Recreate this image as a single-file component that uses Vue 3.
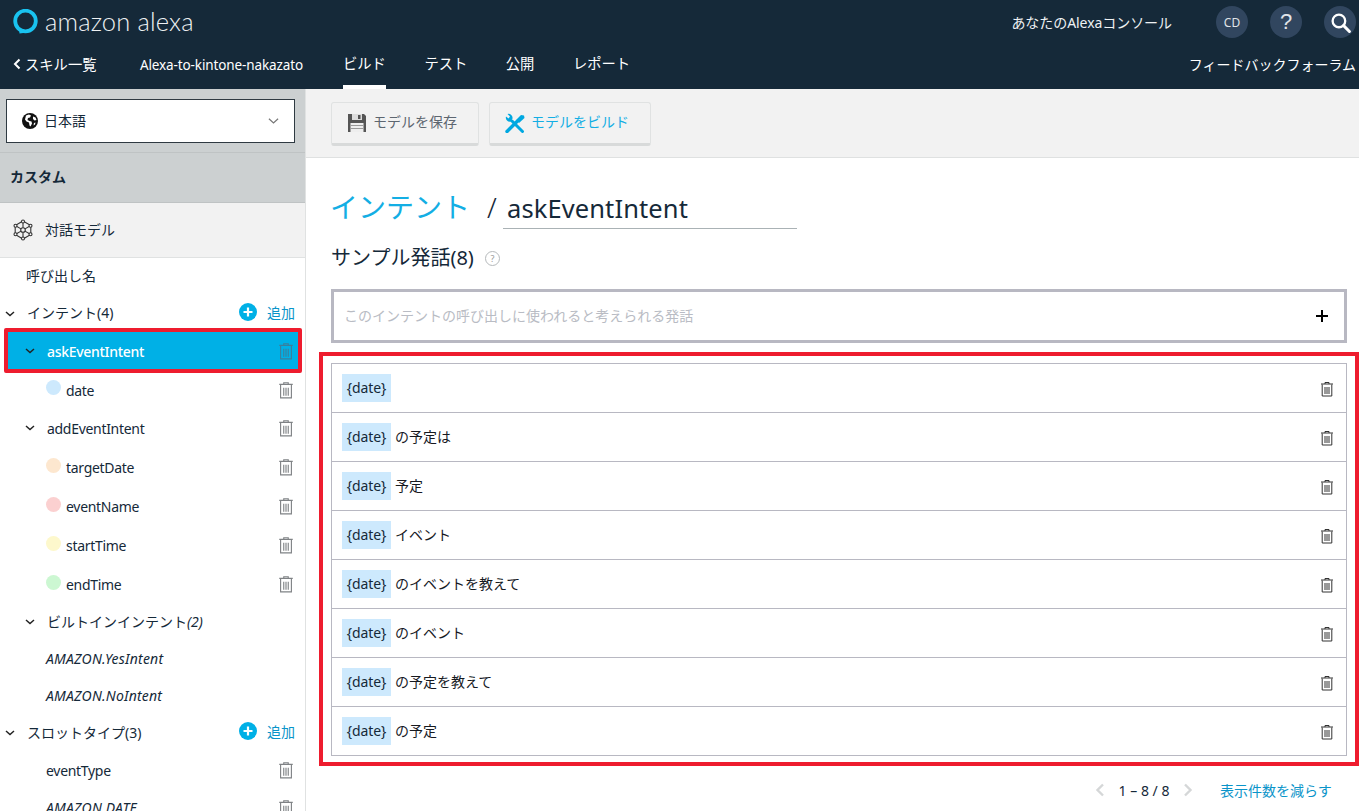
<script setup>
const samples = ['', 'の予定は', '予定', 'イベント', 'のイベントを教えて', 'のイベント', 'の予定を教えて', 'の予定']
const tabs = [
  { label: 'ビルド', active: true },
  { label: 'テスト' },
  { label: '公開' },
  { label: 'レポート' }
]
const slots = [
  { name: 'targetDate', color: '#fde7cf' },
  { name: 'eventName', color: '#fbd0d0' },
  { name: 'startTime', color: '#fdf8cc' },
  { name: 'endTime', color: '#ccf7d2' }
]
</script>

<template>
  <div class="page">
    <header class="header">
      <div class="top">
        <div class="brand">
          <svg class="ring" viewBox="0 0 25 25">
            <circle cx="12.500" cy="12" r="10.300" fill="none" stroke="#19c3f0" stroke-width="3.800"/>
            <path d="M6 19.500L6.500 24.500 14 23.500 10 20z" fill="#19c3f0"/>
          </svg>
          <span class="wordmark">amazon alexa</span>
        </div>
        <div class="top-right">
          <span class="console">あなたのAlexaコンソール</span>
          <span class="round cd">CD</span>
          <span class="round q">?</span>
          <span class="round">
            <svg viewBox="0 0 20 20" class="search"><circle cx="8.500" cy="8.500" r="6" fill="none" stroke="#fff" stroke-width="2.200"/><path d="M13 13l5.500 5.500" stroke="#fff" stroke-width="2.800" stroke-linecap="round"/></svg>
          </span>
        </div>
      </div>
      <div class="nav">
        <span class="back"><svg viewBox="0 0 8 12" class="back-icon"><path d="M6.500 1.500L2 6l4.500 4.500" fill="none" stroke="#fff" stroke-width="2"/></svg>スキル一覧</span>
        <span class="skill">Alexa-to-kintone-nakazato</span>
        <span v-for="t in tabs" :key="t.label" class="tab" :class="{ active: t.active }">{{ t.label }}</span>
        <span class="feedback">フィードバックフォーラム</span>
      </div>
    </header>

    <div class="body">
      <aside class="side">
        <div class="lang-wrap">
          <div class="lang">
            <svg viewBox="0 0 16 16" class="globe"><circle cx="8" cy="8" r="8" fill="#111"/><path d="M4 2.500l3-1 2 1-1 2-2 .5-.5 2 2 1 2 .5.5 2-1.500 3-1-1-.5-3-2.500-1-1.500-2zM11 3.500l2.500 1 1 2.500-2 .5-1.500-1.500zM12 10l1.500-.5-.5 2-1.500 1z" fill="#fff"/></svg>
            <span class="cjk">日本語</span>
            <svg viewBox="0 0 12 8" class="lang-caret"><path d="M1 1.500l5 4.500 5-4.500" fill="none" stroke="#777" stroke-width="1.300"/></svg>
          </div>
        </div>
        <div class="custom">カスタム</div>
        <div class="model">
          <svg viewBox="0 0 22 22" class="gear"><g fill="none" stroke="#333" stroke-width="1.100"><path d="M11 2l7.800 4.500v9L11 20l-7.800-4.500v-9z"/><circle cx="11" cy="11" r="2.300"/><path d="M11 2v6.700M3.200 6.500l5.800 3.400M18.800 6.500L13 9.900M3.200 15.500l5.800-3.400M18.800 15.500L13 12.100M11 20v-6.700"/></g><g fill="#fff" stroke="#333" stroke-width="1.100"><circle cx="11" cy="2.500" r="1.500"/><circle cx="3.500" cy="6.700" r="1.500"/><circle cx="18.500" cy="6.700" r="1.500"/><circle cx="3.500" cy="15.300" r="1.500"/><circle cx="18.500" cy="15.300" r="1.500"/><circle cx="11" cy="19.500" r="1.500"/></g></svg>
          <span class="cjk">対話モデル</span>
        </div>

        <div class="row r37 lvl0"><span class="lbl up">呼び出し名</span></div>

        <div class="row r37">
          <svg viewBox="0 0 10 6" class="caret c0"><path d="M1 1l4 3.500L9 1" fill="none" stroke="#222" stroke-width="1.500"/></svg>
          <span class="lbl up">インテント(4)</span>
          <span class="add"><svg viewBox="0 0 18 18" class="plus"><circle cx="9" cy="9" r="9" fill="#00b0e6"/><path d="M9 4.500v9M4.500 9h9" stroke="#fff" stroke-width="2.200"/></svg>追加</span>
        </div>

        <div class="row r38 selected">
          <svg viewBox="0 0 10 6" class="caret c1"><path d="M1 1l4 3.500L9 1" fill="none" stroke="#222" stroke-width="1.500"/></svg>
          <span class="lbl intent">askEventIntent</span>
          <svg viewBox="0 0 14 16" class="trash side-trash sel-trash"><g fill="none" stroke="currentColor"><path d="M1 3h12M5 3V1.500h4V3"/><path d="M2.200 3.500v11.500h9.600V3.500"/><path d="M5 6v7M7 6v7M9 6v7"/></g></svg>
        </div>

        <div class="row r40 slot">
          <i class="dot dot-date"></i><span class="lbl latin">date</span>
          <svg viewBox="0 0 14 16" class="trash side-trash"><g fill="none" stroke="currentColor"><path d="M1 3h12M5 3V1.500h4V3"/><path d="M2.200 3.500v11.500h9.600V3.500"/><path d="M5 6v7M7 6v7M9 6v7"/></g></svg>
        </div>

        <div class="row r36 add-intent">
          <svg viewBox="0 0 10 6" class="caret c1"><path d="M1 1l4 3.500L9 1" fill="none" stroke="#222" stroke-width="1.500"/></svg>
          <span class="lbl latin">addEventIntent</span>
          <svg viewBox="0 0 14 16" class="trash side-trash"><g fill="none" stroke="currentColor"><path d="M1 3h12M5 3V1.500h4V3"/><path d="M2.200 3.500v11.500h9.600V3.500"/><path d="M5 6v7M7 6v7M9 6v7"/></g></svg>
        </div>

        <div v-for="s in slots" :key="s.name" class="row r39 slot lower">
          <i class="dot" :style="{ background: s.color }"></i><span class="lbl latin">{{ s.name }}</span>
          <svg viewBox="0 0 14 16" class="trash side-trash"><g fill="none" stroke="currentColor"><path d="M1 3h12M5 3V1.500h4V3"/><path d="M2.200 3.500v11.500h9.600V3.500"/><path d="M5 6v7M7 6v7M9 6v7"/></g></svg>
        </div>

        <div class="row r36">
          <svg viewBox="0 0 10 6" class="caret c1"><path d="M1 1l4 3.500L9 1" fill="none" stroke="#222" stroke-width="1.500"/></svg>
          <span class="lbl cjk">ビルトインインテント<em>(2)</em></span>
        </div>
        <div class="row r37 lvl2"><span class="lbl"><em class="wide">AMAZON.YesIntent</em></span></div>
        <div class="row r37 lvl2"><span class="lbl"><em class="wide">AMAZON.NoIntent</em></span></div>

        <div class="row r37">
          <svg viewBox="0 0 10 6" class="caret c0"><path d="M1 1l4 3.500L9 1" fill="none" stroke="#222" stroke-width="1.500"/></svg>
          <span class="lbl cjk">スロットタイプ(3)</span>
          <span class="add"><svg viewBox="0 0 18 18" class="plus"><circle cx="9" cy="9" r="9" fill="#00b0e6"/><path d="M9 4.500v9M4.500 9h9" stroke="#fff" stroke-width="2.200"/></svg>追加</span>
        </div>
        <div class="row r38 lvl2">
          <span class="lbl latin">eventType</span>
          <svg viewBox="0 0 14 16" class="trash side-trash"><g fill="none" stroke="currentColor"><path d="M1 3h12M5 3V1.500h4V3"/><path d="M2.200 3.500v11.500h9.600V3.500"/><path d="M5 6v7M7 6v7M9 6v7"/></g></svg>
        </div>
        <div class="row r37 lvl2">
          <span class="lbl"><em class="wide">AMAZON.DATE</em></span>
          <svg viewBox="0 0 14 16" class="trash side-trash"><g fill="none" stroke="currentColor"><path d="M1 3h12M5 3V1.500h4V3"/><path d="M2.200 3.500v11.500h9.600V3.500"/><path d="M5 6v7M7 6v7M9 6v7"/></g></svg>
        </div>

        <div class="mark mark-side"></div>
      </aside>

      <main class="main">
        <div class="toolbar">
          <button class="btn save">
            <svg viewBox="0 0 20 20" class="btn-icon"><path d="M1 1h16l2 2v16H1z" fill="#555"/><rect x="5" y="1" width="10" height="6" fill="#ddd"/><rect x="11" y="2" width="2.500" height="4" fill="#555"/><rect x="3.500" y="10" width="13" height="9" fill="#eee"/><path d="M3.500 12.500h13M3.500 15.500h13" stroke="#999"/></svg>
            <span class="btn-text">モデルを保存</span>
          </button>
          <button class="btn build">
            <svg viewBox="0 0 20 20" class="btn-icon"><path d="M2 18.500L12 8.500" stroke="#00a8e1" stroke-width="3.400" stroke-linecap="round"/><path d="M11 7l5-5 3 .5.500 2.500-5.500 5z" fill="#00a8e1"/><path d="M17.500 18.500L7 8" stroke="#00a8e1" stroke-width="3" stroke-linecap="round"/><path d="M7.500 5.500A4 4 0 0 0 2.500 1L5 3.500 3.500 5.500 1 3.500A4 4 0 0 0 6 8.500z" fill="#00a8e1"/></svg>
            <span class="btn-text">モデルをビルド</span>
          </button>
        </div>

        <div class="content">
          <div class="title">
            <span class="crumb">インテント</span>
            <span class="slash">/</span>
            <span class="intent-name">askEventIntent</span>
          </div>
          <div class="subtitle">
            <span>サンプル発話(8)</span>
            <span class="help">?</span>
          </div>
          <div class="utter">
            <span class="ph">このインテントの呼び出しに使われると考えられる発話</span>
            <svg viewBox="0 0 12 12" class="utter-plus"><path d="M6 0v12M0 6h12" stroke="#000" stroke-width="2"/></svg>
          </div>
          <div class="list-wrap">
            <div class="list">
              <div v-for="(s, i) in samples" :key="i" class="item">
                <span class="chip">{date}</span>
                <span class="item-text">{{ s }}</span>
                <svg viewBox="0 0 14 16" class="trash item-trash"><g fill="none" stroke="currentColor"><path d="M1 3h12M5 3V1.500h4V3"/><path d="M2.200 3.500v11.500h9.600V3.500"/><path d="M5 6v7M7 6v7M9 6v7"/></g></svg>
              </div>
            </div>
            <div class="mark mark-list"></div>
          </div>
          <div class="pager">
            <svg viewBox="0 0 10 14" class="pg"><path d="M8 1.500L2.500 7 8 12.500" fill="none" stroke="#d5d7d8" stroke-width="2.400"/></svg>
            <span class="pg-text">1 – 8 / 8</span>
            <svg viewBox="0 0 10 14" class="pg"><path d="M2 1.500L7.500 7 2 12.500" fill="none" stroke="#d5d7d8" stroke-width="2.400"/></svg>
            <span class="less">表示件数を減らす</span>
          </div>
        </div>
      </main>
    </div>
  </div>
</template>

<style>
html, body { margin: 0; overflow: hidden; }
</style>

<style scoped>
.page {
  width: 1359px;
  height: 811px;
  overflow: hidden;
  display: flex;
  flex-direction: column;
  font-family: "Noto Sans", "Noto Sans CJK JP", sans-serif;
  font-size: 14px;
  color: #152939;
  background: #fff;
}
.header { height: 89px; flex: none; background: #152939; color: #fff; }
.top { height: 44px; display: flex; align-items: center; justify-content: space-between; }
.brand { display: flex; align-items: center; padding-left: 13px; }
.ring { width: 25px; height: 25px; margin-top: -1px; }
.wordmark { margin-left: 7px; font-family: Lato, sans-serif; font-weight: 300; font-size: 25.500px; letter-spacing: .15px; color: #eef1f3; line-height: 44px; margin-top: -2px; }
.top-right { display: flex; align-items: center; }
.console { font-size: 14px; margin-right: 44px; color: #eef1f3; letter-spacing: -.06px; }
.round { width: 32px; height: 32px; border-radius: 50%; background: #31465f; display: flex; align-items: center; justify-content: center; margin-right: 22px; flex: none; }
.round:last-child { margin-right: 3px; }
.cd { font-size: 12px; color: #e0e4e8; }
.q { font-size: 22px; color: #e0e4e8; font-family: "Liberation Sans", sans-serif; }
.search { width: 21px; height: 21px; }
.nav { height: 45px; display: flex; align-items: center; position: relative; }
.back { display: flex; align-items: center; width: 140px; padding-left: 13px; box-sizing: border-box; font-size: 14.300px; height: 40px; margin-bottom: 6px; }
.back-icon { width: 8px; height: 12px; margin-right: 4px; }
.skill { width: 203px; font-size: 13.500px; letter-spacing: -.12px; margin-bottom: 3px; }
.tab { height: 45px; line-height: 40px; box-sizing: border-box; margin-right: 38.500px; font-size: 14.300px; }
.tab.active { border-bottom: 4px solid #fff; }
.feedback { margin-left: auto; padding-right: 3px; font-size: 14px; margin-bottom: 5px; }

.body { flex: 1; display: flex; min-height: 0; }
.side { width: 306px; flex: none; box-sizing: border-box; border-right: 1px solid #e0e2e2; position: relative; overflow: hidden; }
.lang-wrap { height: 64px; background: #ccd0d1; padding: 10px 10px 0 6px; box-sizing: border-box; border-bottom: 1px solid #bfc3c4; }
.lang { height: 44px; width: 289px; box-sizing: border-box; background: #fff; border: 1px solid #2f3a42; display: flex; align-items: center; padding: 0 15px; }
.globe { width: 16px; height: 16px; margin-right: 6px; }
.lang-caret { width: 11px; height: 8px; margin-left: auto; }
.custom { height: 50px; background: #ccd0d1; border-bottom: 1px solid #bfc3c4; box-sizing: border-box; padding-left: 10px; line-height: 47px; font-weight: 700; color: #152939; }
.model { height: 55px; box-sizing: border-box; background: #f2f2f2; border-bottom: 1px solid #e0e2e2; display: flex; align-items: center; padding-left: 12px; font-size: 14px; }
.gear { width: 22px; height: 22px; margin-right: 11px; }
.cjk { margin-top: -2px; }
.up { margin-top: -3px; }

.row { display: flex; align-items: center; padding-right: 11px; position: relative; }
.r36 { height: 36px; }
.r37 { height: 37px; }
.r38 { height: 38px; }
.r39 { height: 39px; }
.r40 { height: 40px; }
.add-intent { margin-bottom: 2px; }
.lvl0 { padding-left: 26px; }
.lvl2 { padding-left: 46px; }
.lbl { white-space: nowrap; }
.latin { letter-spacing: -.3px; }
.wide { letter-spacing: .2px; }
.caret { width: 10px; height: 6px; flex: none; }
.c0 { margin-left: 5px; margin-right: 12px; }
.c1 { margin-left: 25px; margin-right: 12px; }
.intent { font-weight: 500; letter-spacing: -.3px; }
.selected { background: #00b0e6; margin-left: 6px; margin-right: 3px; padding-right: 8px; color: #fff; }
.selected .c1 { margin-left: 19px; }
.add { margin-left: auto; margin-right: -1px; margin-top: -3px; display: flex; align-items: center; color: #0a94c9; }
.plus { width: 18px; height: 18px; margin-right: 10px; }
.slot { padding-left: 46px; }
.lower .side-trash { margin-top: -2px; }
.dot { width: 15px; height: 15px; border-radius: 50%; margin-right: 5px; margin-top: -5px; flex: none; }
.dot-date { background: #cde9fd; }
.trash { width: 16px; height: 18px; flex: none; }
.side-trash { margin-left: auto; color: #7f8285; }
.sel-trash { color: #3a7f9c; }
.mark { position: absolute; border: 4px solid #ee1c2e; box-sizing: border-box; pointer-events: none; }
.mark-side { left: 4px; top: 239px; width: 298px; height: 45px; border-radius: 2px; }

.main { flex: 1; min-width: 0; }
.toolbar { height: 69px; box-sizing: border-box; background: #f2f2f2; border-bottom: 1px solid #dfe1e1; display: flex; padding: 13px 0 0 25px; gap: 10px; }
.btn { height: 44px; box-sizing: border-box; background: #f2f2f2; border: 1px solid #e0e2e2; border-bottom: 3px solid #d8dada; border-radius: 3px; display: flex; align-items: center; font: inherit; font-size: 14px; padding: 0 15px; margin: 0; }
.save { width: 148px; color: #5d6670; }
.build { width: 162px; color: #13aee4; }
.btn-icon { width: 20px; height: 20px; margin-right: 6px; flex: none; }
.btn-text { margin-top: -4px; }
.content { padding: 0 12px 0 25px; }
.title { height: 71px; box-sizing: border-box; padding-top: 29px; display: flex; align-items: flex-start; }
.crumb { font-size: 28px; line-height: 40px; color: #13aee4; width: 156px; margin-left: -1px; margin-right: 1px; }
.slash { font-size: 28px; line-height: 40px; width: 16px; font-weight: 300; }
.intent-name { font-size: 25.500px; line-height: 42px; width: 294px; height: 42px; padding-left: 4px; border-bottom: 1px solid #aab2b5; box-sizing: border-box; letter-spacing: .1px; }
.subtitle { height: 60px; display: flex; align-items: flex-start; padding-top: 15px; box-sizing: border-box; font-size: 20px; line-height: 28px; }
.help { width: 13px; height: 13px; border: 1px solid #b5b9bb; border-radius: 50%; color: #999; font-size: 9px; line-height: 13px; text-align: center; margin: 7px 0 0 11px; }
.utter { width: 1016px; height: 54px; box-sizing: border-box; border: 3px solid #b8b8c2; display: flex; align-items: center; justify-content: space-between; padding: 0 16px 0 10px; }
.ph { color: #b9bcc4; font-size: 14px; margin-top: -2px; }
.utter-plus { width: 12px; height: 12px; }
.list-wrap { position: relative; margin-top: 20px; }
.list { width: 1016px; border: 1px solid #b8b8c2; box-sizing: border-box; }
.item { height: 49px; box-sizing: border-box; border-bottom: 1px solid #b8b8c2; display: flex; align-items: center; padding: 0 11px 0 10px; }
.item:last-child { border-bottom: 0; height: 48px; }
.chip { background: #cde9fd; height: 28px; line-height: 28px; width: 49px; text-align: center; font-size: 14px; flex: none; letter-spacing: -.1px; }
.item-text { margin-left: 4px; margin-top: -2px; color: #16191f; }
.item-trash { margin-left: auto; color: #333; width: 14px; height: 16px; margin-top: 2px; margin-right: 1px; }
.mark-list { left: -12px; top: -11px; width: 1040px; height: 414px; }
.pager { display: flex; align-items: center; height: 28px; margin-top: 20px; padding-left: 764px; }
.pg { width: 10px; height: 14px; flex: none; }
.pg-text { width: 78px; text-align: center; font-size: 14px; white-space: nowrap; }
.less { margin-left: 27px; color: #0a94c9; font-size: 14px; white-space: nowrap; }
</style>
